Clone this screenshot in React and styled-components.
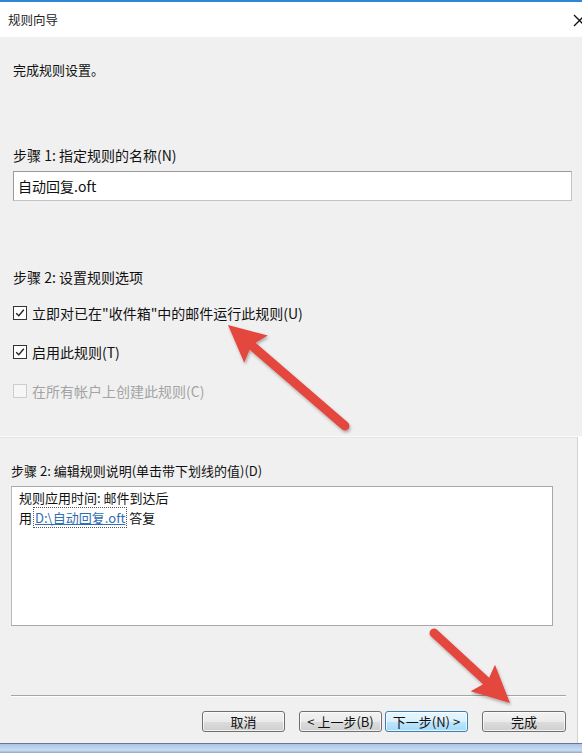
import React from 'react'
import styled, { createGlobalStyle } from 'styled-components'

const GlobalStyle = createGlobalStyle`
  html, body { margin: 0; padding: 0; background: #f0f0f0; }
  #root { width: 582px; height: 753px; }
`

const Window = styled.div`
  position: relative;
  width: 582px;
  height: 753px;
  overflow: hidden;
  background: #f0f0f0;
  color: #111;
  display: flex;
  flex-direction: column;
  font-family: "Noto Sans CJK SC", "Noto Sans", sans-serif;
`

const TitleBar = styled.div`
  height: 35px;
  flex: none;
  border-top: 2px solid #2f86d6;
  background: #fff;
  display: flex;
  align-items: center;
  justify-content: space-between;
  padding-left: 8px;
  font-size: 12.5px;
  color: #222;
`

const CloseIcon = styled.svg`
  width: 13px;
  height: 13px;
  margin-right: -4px;
  margin-top: 1px;
`

const UpperPanel = styled.div`
  height: 399px;
  flex: none;
  padding: 0 10px 0 13px;
  display: flex;
  flex-direction: column;
  border-bottom: 1px solid #fafafa;
  box-shadow: 0 1px 0 #e6e6e6;
`

const Intro = styled.div`
  margin-top: 24px;
  font-size: 13px;
  line-height: 18px;
`

const StepLabel = styled.div`
  margin-top: ${p => p.gap}px;
  font-size: ${p => p.size || 14}px;
  line-height: 18px;
`

const NameInput = styled.div`
  margin-top: 7px;
  height: 28px;
  border: 1px solid #9a9a9a;
  border-right-color: #c4c4c4;
  border-bottom-color: #c4c4c4;
  background: #fff;
  display: flex;
  align-items: center;
  padding-left: 4px;
  font-size: 14px;
`

const Options = styled.div`
  margin-top: 18px;
  display: flex;
  flex-direction: column;
  gap: 21px;
`

const OptionRow = styled.label`
  display: flex;
  align-items: center;
  gap: 5px;
  font-size: 14px;
  line-height: 18px;
  color: ${p => (p.disabled ? '#a3a3a3' : '#111')};
`

const Box = styled.span`
  width: 12px;
  height: 12px;
  border: 1px solid ${p => (p.disabled ? '#cdcdcd' : '#333')};
  background: ${p => (p.disabled ? '#f6f6f6' : '#fff')};
  display: flex;
  align-items: center;
  justify-content: center;
`

const LowerPanel = styled.div`
  flex: 1;
  display: flex;
  flex-direction: column;
  padding-left: 11px;
  border-right: 4px solid #fff;
  box-shadow: inset -1px 0 0 #d2d2d2;
`

const DescBox = styled.div`
  margin-top: 6px;
  width: 542px;
  height: 140px;
  box-sizing: border-box;
  border: 1px solid #a8a8a8;
  border-left-color: #b8b8b8;
  background: #fff;
  padding: 1px 0 0 7px;
  font-size: 13px;
  line-height: 20px;
`

const LinkValue = styled.span`
  color: #2f6db4;
  text-decoration: underline;
  outline: 1px dotted #555;
  margin: 0 3px 0 2px;
  padding: 0 1px;
`

const Separator = styled.div`
  margin-top: 69px;
  width: 555px;
  height: 1px;
  background: #a5a5a5;
  border-bottom: 1px solid #fdfdfd;
`

const ButtonRow = styled.div`
  margin-top: 14px;
  display: flex;
  padding-left: 191px;
`

const Button = styled.div`
  width: ${p => p.w || 83}px;
  height: 21px;
  box-sizing: border-box;
  margin-left: ${p => p.gap || 0}px;
  border: 1px solid ${p => (p.primary ? '#3c7fb1' : '#707070')};
  border-radius: 3px;
  background: ${p =>
    p.primary
      ? 'linear-gradient(#eaf6fd 0%, #d9f0fc 50%, #bee6fd 51%, #a7d9f5 100%)'
      : 'linear-gradient(#f2f2f2 0%, #ebebeb 50%, #dddddd 51%, #cfcfcf 100%)'};
  box-shadow: inset 0 0 0 1px rgba(255, 255, 255, 0.7);
  display: flex;
  align-items: center;
  justify-content: center;
  font-size: 13px;
  color: #111;
`

const Taskbar = styled.div`
  height: 9px;
  flex: none;
  border-top: 1px solid #6c7888;
  background: linear-gradient(#a9c6e8, #c9dcf1 70%, #8ea7c4);
`

const ArrowLayer = styled.svg`
  position: absolute;
  left: 0;
  top: 0;
  width: 582px;
  height: 753px;
  pointer-events: none;
`

const Arrow = ({ tail, tip }) => {
  const dx = tip[0] - tail[0]
  const dy = tip[1] - tail[1]
  const len = Math.hypot(dx, dy)
  const ux = dx / len
  const uy = dy / len
  const px = -uy
  const py = ux
  const headLen = 37
  const half = 18
  const bx = tip[0] - ux * headLen
  const by = tip[1] - uy * headLen
  const nx = bx + ux * 6
  const ny = by + uy * 6
  const pts = [
    [tip[0], tip[1]],
    [bx + px * half, by + py * half],
    [nx, ny],
    [bx - px * half, by - py * half],
  ]
    .map(p => p.join(','))
    .join(' ')
  return (
    <g filter="url(#shadow)">
      <line x1={tail[0]} y1={tail[1]} x2={nx} y2={ny} stroke="#e4463d" strokeWidth="9" strokeLinecap="round" />
      <polygon points={pts} fill="#e4463d" />
    </g>
  )
}

const Check = () => (
  <svg width="10" height="10" viewBox="0 0 10 10">
    <path d="M1.2 5.2 L3.8 7.8 L8.8 1.8" fill="none" stroke="#222" strokeWidth="1.4" />
  </svg>
)

const Option = ({ checked, disabled, children }) => (
  <OptionRow disabled={disabled}>
    <Box disabled={disabled}>{checked && <Check />}</Box>
    {children}
  </OptionRow>
)

export default function App() {
  return (
    <Window>
      <GlobalStyle />
      <TitleBar>
        <span>规则向导</span>
        <CloseIcon viewBox="0 0 13 13">
          <path d="M1 1 L12 12 M12 1 L1 12" stroke="#111" strokeWidth="1.3" />
        </CloseIcon>
      </TitleBar>
      <UpperPanel>
        <Intro>完成规则设置。</Intro>
        <StepLabel gap={67}>步骤 1: 指定规则的名称(N)</StepLabel>
        <NameInput>自动回复.oft</NameInput>
        <StepLabel gap={67}>步骤 2: 设置规则选项</StepLabel>
        <Options>
          <Option checked>立即对已在"收件箱"中的邮件运行此规则(U)</Option>
          <Option checked>启用此规则(T)</Option>
          <Option disabled>在所有帐户上创建此规则(C)</Option>
        </Options>
      </UpperPanel>
      <LowerPanel>
        <StepLabel gap={25} size={13}>步骤 2: 编辑规则说明(单击带下划线的值)(D)</StepLabel>
        <DescBox>
          <div>规则应用时间: 邮件到达后</div>
          <div>
            用<LinkValue>D:\自动回复.oft</LinkValue>答复
          </div>
        </DescBox>
        <Separator />
        <ButtonRow>
          <Button>取消</Button>
          <Button gap={14}>&lt; 上一步(B)</Button>
          <Button gap={3} primary>下一步(N) &gt;</Button>
          <Button gap={14} w={84}>完成</Button>
        </ButtonRow>
      </LowerPanel>
      <Taskbar />
      <ArrowLayer viewBox="0 0 582 753">
        <defs>
          <filter id="shadow" x="-20%" y="-20%" width="140%" height="140%">
            <feDropShadow dx="1" dy="2" stdDeviation="1.5" floodColor="#000" floodOpacity="0.3" />
          </filter>
        </defs>
        <Arrow tail={[345, 426]} tip={[228, 325]} />
        <Arrow tail={[434, 633]} tip={[510, 703]} />
      </ArrowLayer>
    </Window>
  )
}
